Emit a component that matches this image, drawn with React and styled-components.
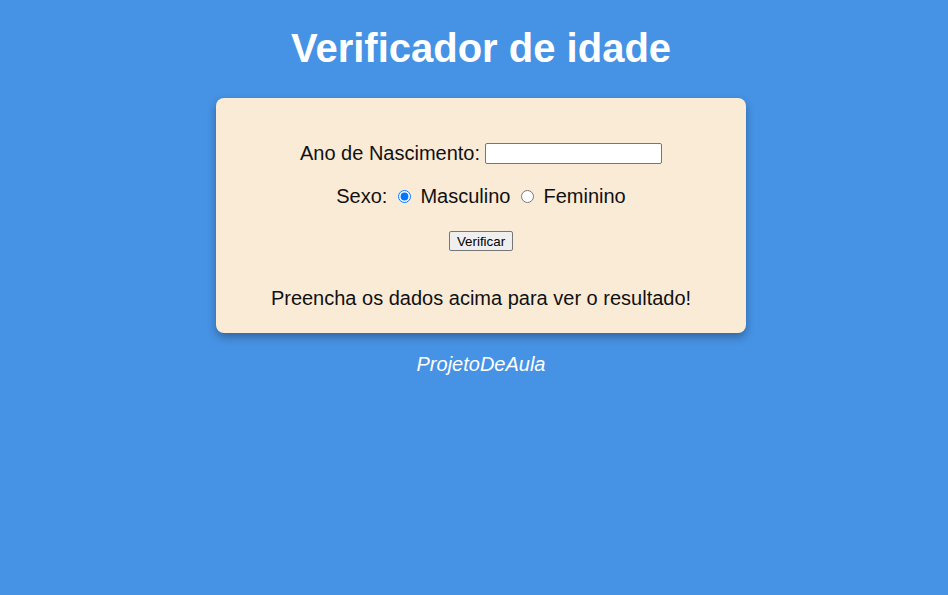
import React, { useState } from "react";
import styled, { createGlobalStyle } from "styled-components";

const GlobalStyle = createGlobalStyle`
  html, body {
    margin: 0;
    padding: 0;
    min-height: 100%;
    background: #4692e4;
    font-family: "Liberation Sans", Arial, sans-serif;
  }
`;

const Page = styled.main`
  display: flex;
  flex-direction: column;
  align-items: center;
  min-height: 595px;
  padding: 25px 0 0 14px;
  box-sizing: border-box;
`;

const Title = styled.h1`
  margin: 0;
  font-size: 40px;
  line-height: 46px;
  font-weight: bold;
  color: #ffffff;
`;

const Card = styled.section`
  width: 530px;
  box-sizing: border-box;
  margin-top: 27px;
  padding: 43px 20px 23px;
  background: #faebd7;
  border-radius: 8px;
  box-shadow: 0 4px 8px rgba(0, 0, 0, 0.3);
  display: flex;
  flex-direction: column;
  align-items: center;
`;

const Row = styled.div`
  display: flex;
  align-items: center;
  justify-content: center;
  margin-top: ${({ space }) => space || 0}px;
  height: ${({ h }) => h || 24}px;
  font-size: 20px;
  color: #111;
  white-space: pre;
`;

const YearInput = styled.input`
  width: 177px;
  height: 21px;
  box-sizing: border-box;
  margin: 0 0 0 5px;
  border: 1px solid #767676;
  border-radius: 2px;
  background: #fff;
  font-size: 13px;
`;

const Radio = styled.input`
  width: 13px;
  height: 13px;
  margin: 0 ${({ after }) => after}px 0 ${({ before }) => before}px;
`;

const Button = styled.button`
  height: 20px;
  padding: 0 7px;
  font-family: "Liberation Sans", Arial, sans-serif;
  font-size: 13.33px;
  color: #000;
  background: #efefef;
  border: 1px solid #767676;
  border-radius: 2px;
`;

const Footer = styled.p`
  margin: 20px 0 0;
  font-size: 20px;
  line-height: 23px;
  font-style: italic;
  color: #ffffff;
`;

export default function App() {
  const [year, setYear] = useState("");
  const [sex, setSex] = useState("m");

  return (
    <>
      <GlobalStyle />
      <Page>
        <Title>Verificador de idade</Title>
        <Card>
          <Row>
            Ano de Nascimento:
            <YearInput
              type="text"
              value={year}
              onChange={(e) => setYear(e.target.value)}
            />
          </Row>
          <Row space={19}>
            Sexo:
            <Radio
              type="radio"
              name="sexo"
              before={11}
              after={9}
              checked={sex === "m"}
              onChange={() => setSex("m")}
            />
            Masculino
            <Radio
              type="radio"
              name="sexo"
              before={11}
              after={9}
              checked={sex === "f"}
              onChange={() => setSex("f")}
            />
            Feminino
          </Row>
          <Row space={23} h={20}>
            <Button type="button">Verificar</Button>
          </Row>
          <Row space={35}>Preencha os dados acima para ver o resultado!</Row>
        </Card>
        <Footer>ProjetoDeAula</Footer>
      </Page>
    </>
  );
}
